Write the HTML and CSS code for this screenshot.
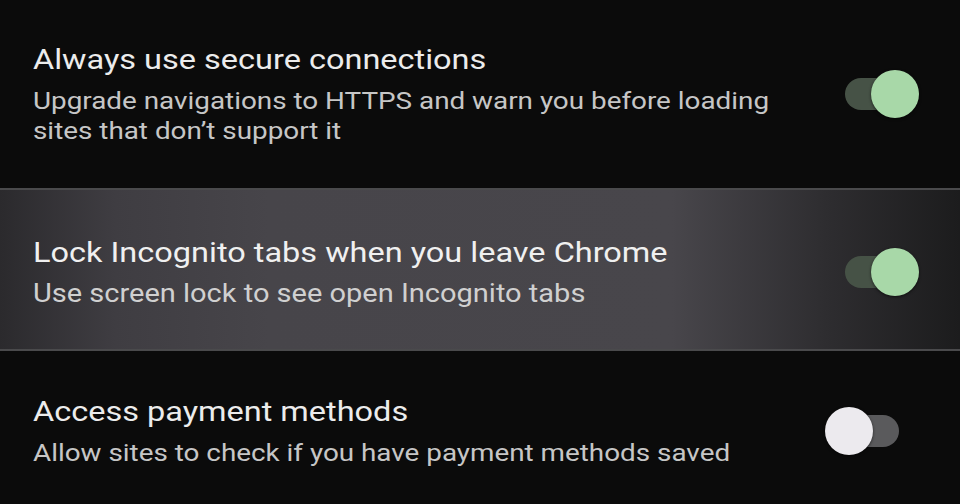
FILE: index.html
```html
<!DOCTYPE html>
<html lang="en">
<head>
<meta charset="utf-8">
<title>Settings</title>
<link rel="stylesheet" href="styles.css">
</head>
<body>
<div class="list">
  <div class="row row-first">
    <div class="text">
      <div class="title">Always use secure connections</div>
      <div class="summary">Upgrade navigations to HTTPS and warn you before loading<br>sites that don’t support it</div>
    </div>
    <div class="switch on"><span class="track"></span><span class="thumb"></span></div>
  </div>
  <div class="row row-lifted">
    <div class="text">
      <div class="title">Lock Incognito tabs when you leave Chrome</div>
      <div class="summary">Use screen lock to see open Incognito tabs</div>
    </div>
    <div class="switch on"><span class="track"></span><span class="thumb"></span></div>
  </div>
  <div class="row row-last">
    <div class="text">
      <div class="title">Access payment methods</div>
      <div class="summary">Allow sites to check if you have payment methods saved</div>
    </div>
    <div class="switch off"><span class="track"></span><span class="thumb"></span></div>
  </div>
</div>
</body>
</html>
```
FILE: styles.css
```css
html, body {
  margin: 0;
  padding: 0;
  background: #0b0b0b;
  height: 504px;
  overflow: hidden;
}
body {
  font-family: Roboto, "Noto Sans", sans-serif;
  color: #e6e6e6;
}
.list {
  display: flex;
  flex-direction: column;
}
.row {
  display: flex;
  align-items: center;
  justify-content: space-between;
  padding: 0 61px 0 33px;
  box-sizing: border-box;
}
.row-first {
  height: 188px;
}
.row-lifted {
  height: 163px;
  border-top: 2px solid #4a4a4c;
  border-bottom: 2px solid #4a4a4c;
  background: linear-gradient(to right, #2b2a2d 0%, #3f3d42 12%, #47454a 28%, #48464b 70%, #2e2d30 86%, #1c1c1d 100%);
  padding-top: 4px;
}
.row-last {
  height: 160px;
}
.text {
  display: flex;
  flex-direction: column;
  gap: 8px;
  transform: scaleX(1.16);
  transform-origin: left center;
}
.title {
  font-size: 28px;
  line-height: 36px;
  color: #ececec;
  white-space: nowrap;
}
.summary {
  font-size: 24px;
  line-height: 30px;
  color: #c6c6c6;
  white-space: nowrap;
}
.row-lifted .title {
  color: #f0f0f0;
}
.row-lifted .summary {
  font-size: 25px;
  color: #d0d0d0;
}
.switch {
  position: relative;
  width: 54px;
  height: 32px;
  flex: none;
}
.track {
  display: block;
  width: 54px;
  height: 32px;
  border-radius: 16px;
}
.thumb {
  position: absolute;
  top: -8px;
  width: 48px;
  height: 48px;
  border-radius: 50%;
  box-shadow: 0 1px 3px rgba(0,0,0,0.6);
}
.switch.on .track {
  background: #465246;
}
.switch.on .thumb {
  left: 26px;
  background: #a8d8a8;
}
.switch.off .track {
  background: #5a5a5c;
}
.switch.off .thumb {
  left: -20px;
  background: #eceaee;
}
```
